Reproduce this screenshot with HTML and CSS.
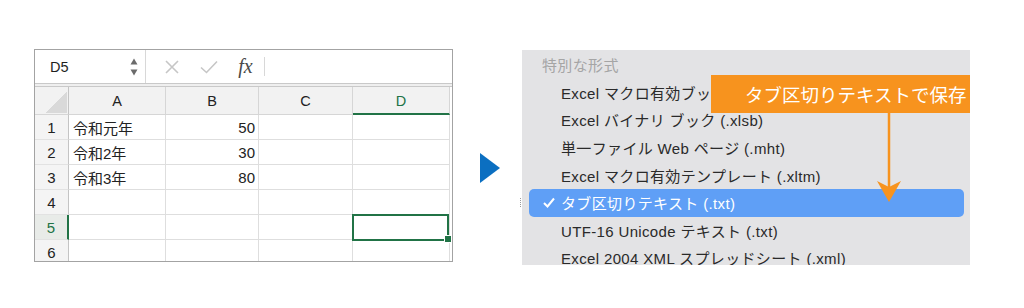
FILE: index.html
```html
<!DOCTYPE html>
<html lang="ja">
<head>
    <meta charset="UTF-8">
    <meta name="viewport" content="width=device-width, initial-scale=1.0">
    <title>タブ区切りテキストで保存</title>
    <link rel="stylesheet" href="styles.css">
</head>
<body>
    <div class="page">
        <!-- スプレッドシート -->
        <div class="sheet">
            <div class="formula-bar">
                <div class="name-box">
                    <span class="cell-ref">D5</span>
                    <svg class="spinner" width="8" height="18" viewBox="0 0 8 18">
                        <polygon points="0.5,6.5 4,0.5 7.5,6.5" fill="#6b6b6b"/>
                        <polygon points="0.5,11.5 7.5,11.5 4,17.5" fill="#6b6b6b"/>
                    </svg>
                </div>
                <div class="bar-buttons">
                    <span class="bar-btn">
                        <svg width="14" height="14" viewBox="0 0 14 14">
                            <path d="M1,1 L13,13 M13,1 L1,13" stroke="#c6c6c6" stroke-width="1.6" fill="none"/>
                        </svg>
                    </span>
                    <span class="bar-btn">
                        <svg width="18" height="14" viewBox="0 0 18 14">
                            <path d="M1,7.5 L6.5,12.5 L17,1.5" stroke="#c6c6c6" stroke-width="1.6" fill="none"/>
                        </svg>
                    </span>
                    <span class="bar-btn fx">fx</span>
                </div>
                <div class="formula-input"></div>
            </div>
            <div class="bar-sep"></div>

            <div class="grid">
                <div class="cell corner"><span class="corner-mark"></span></div>
                <div class="cell col-head">A</div>
                <div class="cell col-head">B</div>
                <div class="cell col-head">C</div>
                <div class="cell col-head active">D</div>

                <div class="cell row-head">1</div>
                <div class="cell text">令和元年</div>
                <div class="cell num">50</div>
                <div class="cell"></div>
                <div class="cell"></div>

                <div class="cell row-head">2</div>
                <div class="cell text">令和2年</div>
                <div class="cell num">30</div>
                <div class="cell"></div>
                <div class="cell"></div>

                <div class="cell row-head">3</div>
                <div class="cell text">令和3年</div>
                <div class="cell num">80</div>
                <div class="cell"></div>
                <div class="cell"></div>

                <div class="cell row-head">4</div>
                <div class="cell"></div>
                <div class="cell"></div>
                <div class="cell"></div>
                <div class="cell"></div>

                <div class="cell row-head active">5</div>
                <div class="cell"></div>
                <div class="cell"></div>
                <div class="cell"></div>
                <div class="cell active-cell"><span class="fill-handle"></span></div>

                <div class="cell row-head">6</div>
                <div class="cell"></div>
                <div class="cell"></div>
                <div class="cell"></div>
                <div class="cell"></div>
            </div>
        </div>

        <div class="arrow"></div>

        <!-- 保存形式メニュー -->
        <div class="menu">
            <div class="menu-list">
                <div class="menu-label">特別な形式</div>
                <div class="menu-item"><span class="covered">Excel マクロ有効ブック (.xlsm)</span></div>
                <div class="menu-item">Excel バイナリ ブック (.xlsb)</div>
                <div class="menu-item">単一ファイル Web ページ (.mht)</div>
                <div class="menu-item">Excel マクロ有効テンプレート (.xltm)</div>
                <div class="menu-item checked">
                    <span class="check">
                        <svg width="12" height="11" viewBox="0 0 12 11">
                            <path d="M1,6 L4.5,9.5 L11,1.5" stroke="#fff" stroke-width="2" fill="none"/>
                        </svg>
                    </span>タブ区切りテキスト (.txt)
                </div>
                <div class="menu-item">UTF-16 Unicode テキスト (.txt)</div>
                <div class="menu-item">Excel 2004 XML スプレッドシート (.xml)</div>
            </div>

            <div class="callout">タブ区切りテキストで保存</div>
            <svg class="callout-arrow" width="448" height="215" viewBox="0 0 448 215">
                <line x1="367" y1="63" x2="367" y2="140" stroke="#f7931e" stroke-width="2.5"/>
                <path d="M355,131 L367,137 L379,131 L367,152 Z" fill="#f7931e"/>
            </svg>
        </div>
    </div>
</body>
</html>
```

FILE: styles.css
```css
body {
    margin: 0;
    background-color: #fff;
    font-family: "Liberation Sans", "Noto Sans CJK JP", sans-serif;
}

.page {
    display: flex;
    align-items: flex-start;
    padding: 49px 0 0 34px;
}

/* スプレッドシート */
.sheet {
    width: 419px;
    height: 213px;
    box-sizing: border-box;
    border: 1px solid #a3a3a3;
    display: flex;
    flex-direction: column;
    background-color: #fff;
}

.formula-bar {
    height: 33px;
    display: flex;
    align-items: center;
}

.name-box {
    width: 111px;
    height: 100%;
    box-sizing: border-box;
    border-right: 1px solid #d8d8d8;
    display: flex;
    align-items: center;
    justify-content: space-between;
    padding: 0 7px 0 15px;
}

.cell-ref {
    font-size: 14.5px;
    color: #1e1e1e;
}

.bar-buttons {
    display: flex;
    align-items: center;
    height: 19px;
    padding-left: 7px;
    border-right: 1px solid #d8d8d8;
}

.bar-btn {
    width: 37px;
    display: flex;
    justify-content: center;
    align-items: center;
}

.fx {
    font-family: "Liberation Serif", serif;
    font-style: italic;
    font-size: 20px;
    color: #4a4a4a;
    line-height: 19px;
}

.formula-input {
    flex: 1;
}

.bar-sep {
    height: 4px;
    box-sizing: border-box;
    border-top: 1px solid #c9c9c9;
    border-bottom: 1px solid #c9c9c9;
    background-color: #efefef;
}

.grid {
    flex: 1;
    overflow: hidden;
    display: grid;
    grid-template-columns: 34px 97px 93px 94px 97px;
    grid-template-rows: 28px repeat(6, 25px);
}

.cell {
    box-sizing: border-box;
    border-right: 1px solid #dedede;
    border-bottom: 1px solid #dedede;
    display: flex;
    align-items: center;
    font-size: 15px;
    color: #222;
}

.col-head {
    background-color: #f2f2f2;
    justify-content: center;
    font-size: 14.5px;
    border-color: #d6d6d6;
}

.col-head.active {
    color: #217346;
    border-bottom: 2px solid #217346;
    padding-top: 1px;
}

.corner {
    background-color: #f2f2f2;
    border-color: #d6d6d6;
    border-right-color: #c4c4c4;
    position: relative;
}

.corner-mark {
    position: absolute;
    right: 1px;
    bottom: 1px;
    width: 22px;
    height: 21px;
    background: linear-gradient(to bottom right, transparent 50%, #d9d9d9 50%);
}

.row-head {
    background-color: #f4f4f4;
    justify-content: center;
    border-right-color: #c4c4c4;
    border-bottom-color: #e2e2e2;
}

.row-head.active {
    color: #217346;
    background-color: #e8ebe8;
    border-right: 2px solid #217346;
}

.text {
    padding-left: 4px;
}

.num {
    justify-content: flex-end;
    padding-right: 3px;
}

.active-cell {
    position: relative;
}

.active-cell::after {
    content: "";
    position: absolute;
    left: -1px;
    top: -1px;
    width: 97px;
    height: 27px;
    box-sizing: border-box;
    border: 2px solid #217346;
}

.fill-handle {
    position: absolute;
    right: -3px;
    bottom: -4px;
    width: 6px;
    height: 6px;
    background-color: #217346;
    border: 1px solid #fff;
    z-index: 1;
}

/* 矢印 */
.arrow {
    width: 0;
    height: 0;
    border-left: 20px solid #0b6fc1;
    border-top: 15px solid transparent;
    border-bottom: 15px solid transparent;
    margin: 104px 22px 0 27px;
}

/* メニュー */
.menu {
    position: relative;
    width: 448px;
    height: 215px;
    margin-top: 1px;
    background-color: #e3e3e5;
}

.menu::before {
    content: "";
    position: absolute;
    left: -2px;
    top: 148px;
    height: 9px;
    border-left: 1px dotted #9a9a9a;
}

.menu-list {
    height: 100%;
    overflow: hidden;
    padding-top: 1px;
    box-sizing: border-box;
}

.menu-label,
.menu-item {
    height: 27.6px;
    display: flex;
    align-items: center;
    margin: 0 6px 0 7px;
    font-size: 15px;
    letter-spacing: 0.35px;
    white-space: nowrap;
}

.menu-label {
    padding-left: 13px;
    color: #a5a5a5;
}

.menu-item {
    padding-left: 32px;
    color: #2a2a2a;
}

/* 吹き出しの下に隠れる部分 */
.covered {
    max-width: 150px;
    overflow: hidden;
}

.menu-item.checked {
    padding-left: 14px;
    background-color: #5f9ff6;
    color: #fff;
    border-radius: 5px;
}

.check {
    width: 18px;
    display: flex;
    align-items: center;
}

.callout {
    position: absolute;
    left: 189px;
    top: 25px;
    width: 259px;
    height: 38px;
    box-sizing: border-box;
    padding-left: 34px;
    display: flex;
    align-items: center;
    background-color: #f7931e;
    color: #fff;
    font-family: "Noto Sans CJK JP", sans-serif;
    font-size: 18.5px;
    white-space: nowrap;
}

.callout-arrow {
    position: absolute;
    left: 0;
    top: 0;
    pointer-events: none;
}
```
